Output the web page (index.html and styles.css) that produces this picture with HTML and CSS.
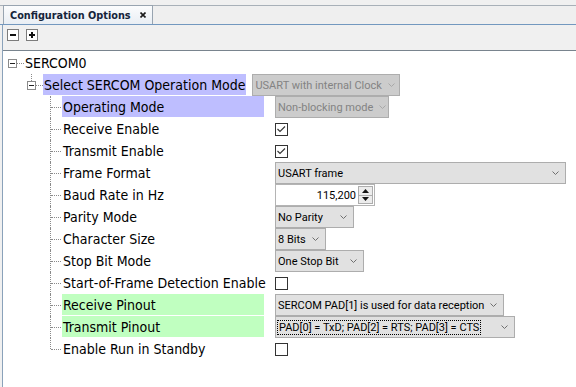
FILE: index.html
```html
<!DOCTYPE html>
<html>
<head>
<meta charset="utf-8">
<link rel="stylesheet" href="styles.css">
</head>
<body>
<div class="tabbar">
  <div class="tab">
    <span class="tab-title">Configuration Options</span>
    <span class="tab-close"><svg width="6" height="6" viewBox="0 0 6 6"><path d="M0.5 0.5L5.5 5.5M5.5 0.5L0.5 5.5" stroke="#1b1b1b" stroke-width="1.6"/></svg></span>
  </div>
</div>
<div class="panel">
  <div class="toolbar">
    <span class="tb-btn"><svg width="12" height="12" viewBox="0 0 12 12"><rect x="0.5" y="0.5" width="11" height="11" fill="#fff" stroke="#7c7c7c"/><path d="M3 6h6" stroke="#111" stroke-width="2"/></svg></span>
    <span class="tb-btn"><svg width="12" height="12" viewBox="0 0 12 12"><rect x="0.5" y="0.5" width="11" height="11" fill="#fff" stroke="#7c7c7c"/><path d="M3 6h6M6 3v6" stroke="#111" stroke-width="2"/></svg></span>
  </div>
  <div class="tree">
    <div class="row d0">
      <span class="exp"><svg width="9" height="9" viewBox="0 0 9 9"><rect x="0.5" y="0.5" width="8" height="8" fill="#fff" stroke="#8a8a8a"/><path d="M2 4.5h5" stroke="#222"/></svg></span>
      <span class="conn"></span>
      <span class="lbl">SERCOM0</span>
    </div>
    <div class="row d1">
      <span class="exp"><svg width="9" height="9" viewBox="0 0 9 9"><rect x="0.5" y="0.5" width="8" height="8" fill="#fff" stroke="#8a8a8a"/><path d="M2 4.5h5" stroke="#222"/></svg></span>
      <span class="conn"></span>
      <span class="lbl hl-blue">Select SERCOM Operation Mode</span>
      <span class="combo disabled cb-mode"><span>USART with internal Clock</span><svg class="chev" width="7" height="4" viewBox="0 0 7 4"><polyline points="0.5,0.5 3.5,3.5 6.5,0.5" fill="none" stroke="#a8a8a8"/></svg></span>
    </div>
    <div class="children">
      <div class="row d2">
        <span class="lbl hl-blue">Operating Mode</span>
        <span class="combo disabled cb-op"><span>Non-blocking mode</span><svg class="chev" width="7" height="4" viewBox="0 0 7 4"><polyline points="0.5,0.5 3.5,3.5 6.5,0.5" fill="none" stroke="#a8a8a8"/></svg></span>
      </div>
      <div class="row d2">
        <span class="lbl">Receive Enable</span>
        <span class="chk"><svg width="11" height="11" viewBox="0 0 11 11"><polyline points="1.5,5 4,7.5 9,2.5" fill="none" stroke="#333" stroke-width="1.1"/></svg></span>
      </div>
      <div class="row d2">
        <span class="lbl">Transmit Enable</span>
        <span class="chk"><svg width="11" height="11" viewBox="0 0 11 11"><polyline points="1.5,5 4,7.5 9,2.5" fill="none" stroke="#333" stroke-width="1.1"/></svg></span>
      </div>
      <div class="row d2">
        <span class="lbl">Frame Format</span>
        <span class="combo cb-frame"><span>USART frame</span><svg class="chev" width="7" height="4" viewBox="0 0 7 4"><polyline points="0.5,0.5 3.5,3.5 6.5,0.5" fill="none" stroke="#6f6f6f"/></svg></span>
      </div>
      <div class="row d2">
        <span class="lbl">Baud Rate in Hz</span>
        <span class="spin">
          <span class="spin-val">115,200</span>
          <span class="spin-btns">
            <span class="spin-btn"><svg width="7" height="4" viewBox="0 0 7 4"><polygon points="3.5,0 7,4 0,4" fill="#111"/></svg></span>
            <span class="spin-btn"><svg width="7" height="4" viewBox="0 0 7 4"><polygon points="0,0 7,0 3.5,4" fill="#111"/></svg></span>
          </span>
        </span>
      </div>
      <div class="row d2">
        <span class="lbl">Parity Mode</span>
        <span class="combo cb-parity"><span>No Parity</span><svg class="chev" width="7" height="4" viewBox="0 0 7 4"><polyline points="0.5,0.5 3.5,3.5 6.5,0.5" fill="none" stroke="#6f6f6f"/></svg></span>
      </div>
      <div class="row d2">
        <span class="lbl">Character Size</span>
        <span class="combo cb-size"><span>8 Bits</span><svg class="chev" width="7" height="4" viewBox="0 0 7 4"><polyline points="0.5,0.5 3.5,3.5 6.5,0.5" fill="none" stroke="#6f6f6f"/></svg></span>
      </div>
      <div class="row d2">
        <span class="lbl">Stop Bit Mode</span>
        <span class="combo cb-stop"><span>One Stop Bit</span><svg class="chev" width="7" height="4" viewBox="0 0 7 4"><polyline points="0.5,0.5 3.5,3.5 6.5,0.5" fill="none" stroke="#6f6f6f"/></svg></span>
      </div>
      <div class="row d2">
        <span class="lbl">Start-of-Frame Detection Enable</span>
        <span class="chk"></span>
      </div>
      <div class="row d2">
        <span class="lbl hl-green">Receive Pinout</span>
        <span class="combo cb-rx"><span>SERCOM PAD[1] is used for data reception</span><svg class="chev" width="7" height="4" viewBox="0 0 7 4"><polyline points="0.5,0.5 3.5,3.5 6.5,0.5" fill="none" stroke="#6f6f6f"/></svg></span>
      </div>
      <div class="row d2">
        <span class="lbl hl-green">Transmit Pinout</span>
        <span class="combo cb-tx"><span class="focus">PAD[0] = TxD; PAD[2] = RTS; PAD[3] = CTS</span><svg class="chev" width="7" height="4" viewBox="0 0 7 4"><polyline points="0.5,0.5 3.5,3.5 6.5,0.5" fill="none" stroke="#6f6f6f"/></svg></span>
      </div>
      <div class="row d2 last">
        <span class="lbl">Enable Run in Standby</span>
        <span class="chk"></span>
      </div>
    </div>
  </div>
</div>
</body>
</html>
```

FILE: styles.css
```css
html, body {
  margin: 0;
  padding: 0;
}
body {
  background: #f0f0f0;
  font-family: "DejaVu Sans Condensed", "DejaVu Sans", sans-serif;
  width: 576px;
  height: 387px;
  overflow: hidden;
}
.tabbar {
  height: 25px;
  box-sizing: border-box;
  padding: 5px 0 0 3px;
  border-bottom: 1px solid #7398bf;
  display: flex;
  background: linear-gradient(to bottom, #f0f0f0 0, #f0f0f0 5px, #a8b0b8 5px, #a8b0b8 6px, #efefef 6px);
}
.tab {
  width: 150px;
  height: 19px;
  box-sizing: border-box;
  border: 1px solid #98a4b0;
  border-bottom: none;
  background: linear-gradient(#fbfcfd, #e9eef4);
  display: flex;
  align-items: center;
  padding-left: 6px;
}
.tab-title {
  font-family: "DejaVu Sans Condensed", "DejaVu Sans", sans-serif;
  font-weight: bold;
  font-size: 10.8px;
  color: #15243a;
  white-space: nowrap;
}
.tab-close {
  margin-left: auto;
  margin-right: 6px;
  display: flex;
}
.panel {
  margin-left: 2px;
  border-left: 1px solid #8aa2ba;
}
.toolbar {
  height: 26px;
  box-sizing: border-box;
  border-bottom: 1px solid #79848e;
  display: flex;
  align-items: flex-start;
  gap: 7px;
  padding: 4px 0 0 4px;
}
.tb-btn {
  display: flex;
  width: 12px;
  height: 12px;
}
.tree {
  background: #fff;
  height: 336px;
  padding-top: 1px;
  box-sizing: border-box;
}
.row {
  position: relative;
  display: flex;
  align-items: center;
  height: 22px;
}
.d0 { padding-left: 5px; }
.d1 { padding-left: 24px; }
.d2 { padding-left: 59px; }
.exp {
  display: flex;
  width: 9px;
  height: 9px;
}
.conn {
  width: 7px;
  height: 0;
  border-top: 1px dotted #8a8a8a;
}
.d1::before {
  content: "";
  position: absolute;
  left: 28px;
  top: 0;
  height: 7px;
  border-left: 1px dotted #8a8a8a;
}
.d2::before {
  content: "";
  position: absolute;
  left: 47px;
  top: 0;
  bottom: 0;
  border-left: 1px dotted #8a8a8a;
}
.d2.last::before {
  bottom: auto;
  height: 11px;
}
.d2::after {
  content: "";
  position: absolute;
  left: 48px;
  top: 11px;
  width: 10px;
  border-top: 1px dotted #8a8a8a;
}
.lbl {
  font-family: "DejaVu Sans Condensed", "DejaVu Sans", sans-serif;
  font-size: 14px;
  color: #000;
  white-space: nowrap;
  height: 21px;
  align-self: flex-start;
  display: flex;
  align-items: center;
  padding: 0 1px;
  box-sizing: border-box;
}
.d1 .lbl { margin-right: 6px; }
.d2 .lbl { width: 202px; margin-right: 11px; }
.hl-blue { background: #bebeff; }
.hl-green { background: #c0ffc0; }
.combo {
  align-self: flex-start;
  height: 22px;
  box-sizing: border-box;
  border: 1px solid #adadad;
  background: #e1e1e1;
  display: flex;
  align-items: center;
  justify-content: space-between;
  padding: 0 6px 0 2px;
  font-family: Roboto, "Liberation Sans", sans-serif;
  font-size: 11px;
  color: #000;
  white-space: nowrap;
}
.combo.disabled {
  background: #cccccc;
  color: #838383;
}
.chev { flex: none; margin-left: 6px; }
.cb-mode { width: 148px; }
.cb-op { width: 114px; }
.cb-frame { width: 291px; }
.cb-parity { width: 79px; }
.cb-size { width: 51px; }
.cb-stop { width: 89px; }
.cb-rx { width: 229px; }
.cb-tx { width: 240px; }
.focus {
  outline: 1px dotted #000;
  outline-offset: 0;
  padding: 0 1px;
}
.chk {
  width: 13px;
  height: 13px;
  box-sizing: border-box;
  border: 1px solid #333;
  background: #fff;
  display: flex;
}
.spin {
  align-self: flex-start;
  width: 100px;
  height: 22px;
  box-sizing: border-box;
  border: 1px solid #b4b4b4;
  background: #fff;
  display: flex;
  padding: 1px;
  font-family: Roboto, "Liberation Sans", sans-serif;
  font-size: 11px;
}
.spin-val {
  flex: 1;
  text-align: right;
  padding-right: 2px;
  align-self: center;
}
.spin-btns {
  width: 15px;
  display: flex;
  flex-direction: column;
}
.spin-btn {
  flex: 1;
  border: 1px solid #adadad;
  background: #ececec;
  display: flex;
  align-items: center;
  justify-content: center;
}
.spin-btn + .spin-btn { border-top: none; }
```
